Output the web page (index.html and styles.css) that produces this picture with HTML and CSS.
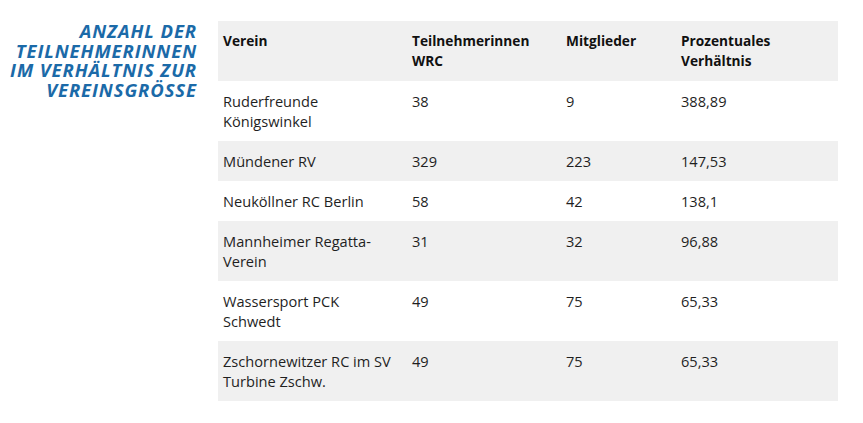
FILE: index.html
```html
<!DOCTYPE html>
<html lang="de">
<head>
<meta charset="utf-8">
<link rel="stylesheet" href="styles.css">
</head>
<body>
<div class="page">
  <h2 class="title">Anzahl der<br>Teilnehmerinnen<br>im Verhältnis zur<br>Vereinsgrösse</h2>
  <table class="data">
    <colgroup>
      <col class="c1"><col class="c2"><col class="c3"><col class="c4">
    </colgroup>
    <thead>
      <tr><th>Verein</th><th>Teilnehmerinnen<br>WRC</th><th>Mitglieder</th><th>Prozentuales<br>Verhältnis</th></tr>
    </thead>
    <tbody>
      <tr><td>Ruderfreunde<br>Königswinkel</td><td>38</td><td>9</td><td>388,89</td></tr>
      <tr><td>Mündener RV</td><td>329</td><td>223</td><td>147,53</td></tr>
      <tr><td>Neuköllner RC Berlin</td><td>58</td><td>42</td><td>138,1</td></tr>
      <tr><td>Mannheimer Regatta-<br>Verein</td><td>31</td><td>32</td><td>96,88</td></tr>
      <tr><td>Wassersport PCK<br>Schwedt</td><td>49</td><td>75</td><td>65,33</td></tr>
      <tr><td>Zschornewitzer RC im SV<br>Turbine Zschw.</td><td>49</td><td>75</td><td>65,33</td></tr>
    </tbody>
  </table>
</div>
</body>
</html>
```
FILE: styles.css
```css
html, body {
  margin: 0;
  padding: 0;
  background: #ffffff;
}
.page {
  display: flex;
  align-items: flex-start;
  gap: 22px;
  padding-top: 21px;
  font-family: "Open Sans", "DejaVu Sans", sans-serif;
}
.title {
  width: 197px;
  margin: 0 -1px 0 0;
  flex: none;
  text-align: right;
  text-transform: uppercase;
  font-style: italic;
  font-weight: 700;
  font-size: 18.5px;
  line-height: 19.5px;
  letter-spacing: 0.9px;
  white-space: nowrap;
  color: #1b6aa8;
}
.data {
  border-collapse: collapse;
  table-layout: fixed;
  width: 620px;
  font-size: 14.6px;
  line-height: 20px;
  color: #1f1f1f;
}
.c1 { width: 189px; }
.c2 { width: 154px; }
.c3 { width: 115px; }
.c4 { width: 162px; }
.data th,
.data td {
  text-align: left;
  vertical-align: top;
  padding: 10px 5px;
}
.data th {
  font-weight: 700;
  font-size: 13.7px;
  color: #111;
}
.data thead tr,
.data tbody tr:nth-child(even) {
  background: #f0f0f0;
}
```
